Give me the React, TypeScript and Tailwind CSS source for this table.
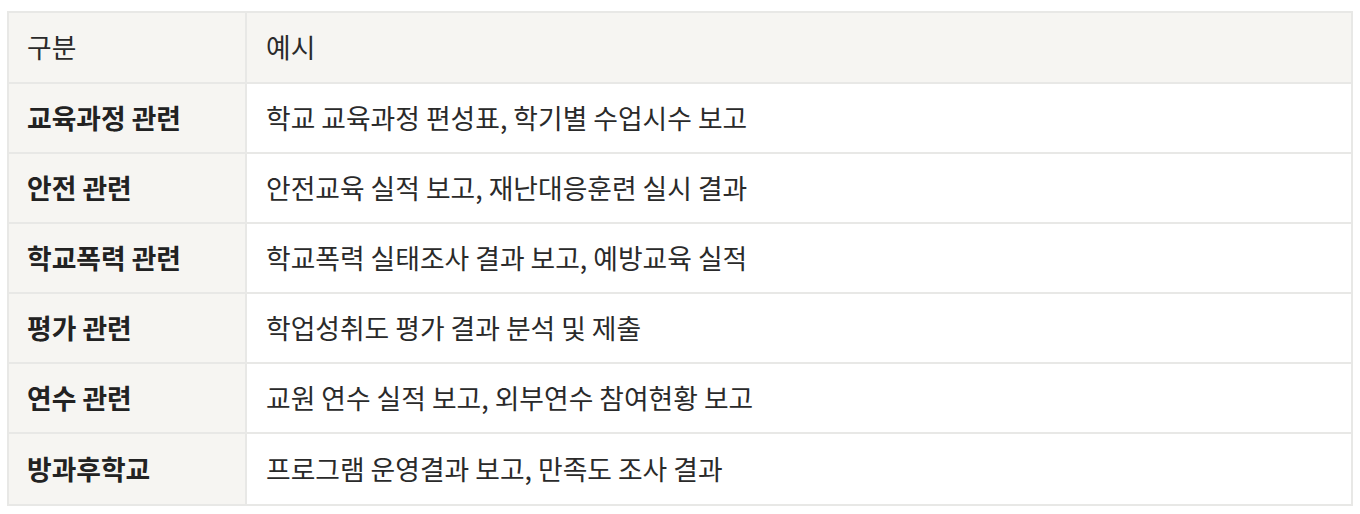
import React from "react";

const rows: [string, string][] = [
  ["교육과정 관련", "학교 교육과정 편성표, 학기별 수업시수 보고"],
  ["안전 관련", "안전교육 실적 보고, 재난대응훈련 실시 결과"],
  ["학교폭력 관련", "학교폭력 실태조사 결과 보고, 예방교육 실적"],
  ["평가 관련", "학업성취도 평가 결과 분석 및 제출"],
  ["연수 관련", "교원 연수 실적 보고, 외부연수 참여현황 보고"],
  ["방과후학교", "프로그램 운영결과 보고, 만족도 조사 결과"],
];

export default function App() {
  return (
    <div
      className="bg-white pt-[11px] px-[7px] pb-[10px]"
      style={{ fontFamily: '"Noto Sans CJK KR", "Noto Sans", sans-serif' }}
    >
      <div className="border-2 border-[#e8e8e6] text-[26.8px] leading-none text-[#2a2a2a]">
        <div className="flex h-[71px] border-b-2 border-[#e8e8e6] bg-[#f6f5f2]">
          <div className="w-[238px] shrink-0 flex items-center pl-[18px] border-r-2 border-[#e8e8e6]">
            구분
          </div>
          <div className="flex-1 flex items-center pl-[19px]">예시</div>
        </div>
        {rows.map(([a, b], i) => (
          <div
            key={a}
            className={
              "flex h-[70px] " +
              (i < rows.length - 1 ? "border-b-2 border-[#e8e8e6]" : "")
            }
          >
            <div className="w-[238px] shrink-0 flex items-center pl-[18px] bg-[#f6f5f2] border-r-2 border-[#e8e8e6] font-bold text-[#222]">
              {a}
            </div>
            <div className="flex-1 flex items-center pl-[19px] bg-white">{b}</div>
          </div>
        ))}
      </div>
    </div>
  );
}
